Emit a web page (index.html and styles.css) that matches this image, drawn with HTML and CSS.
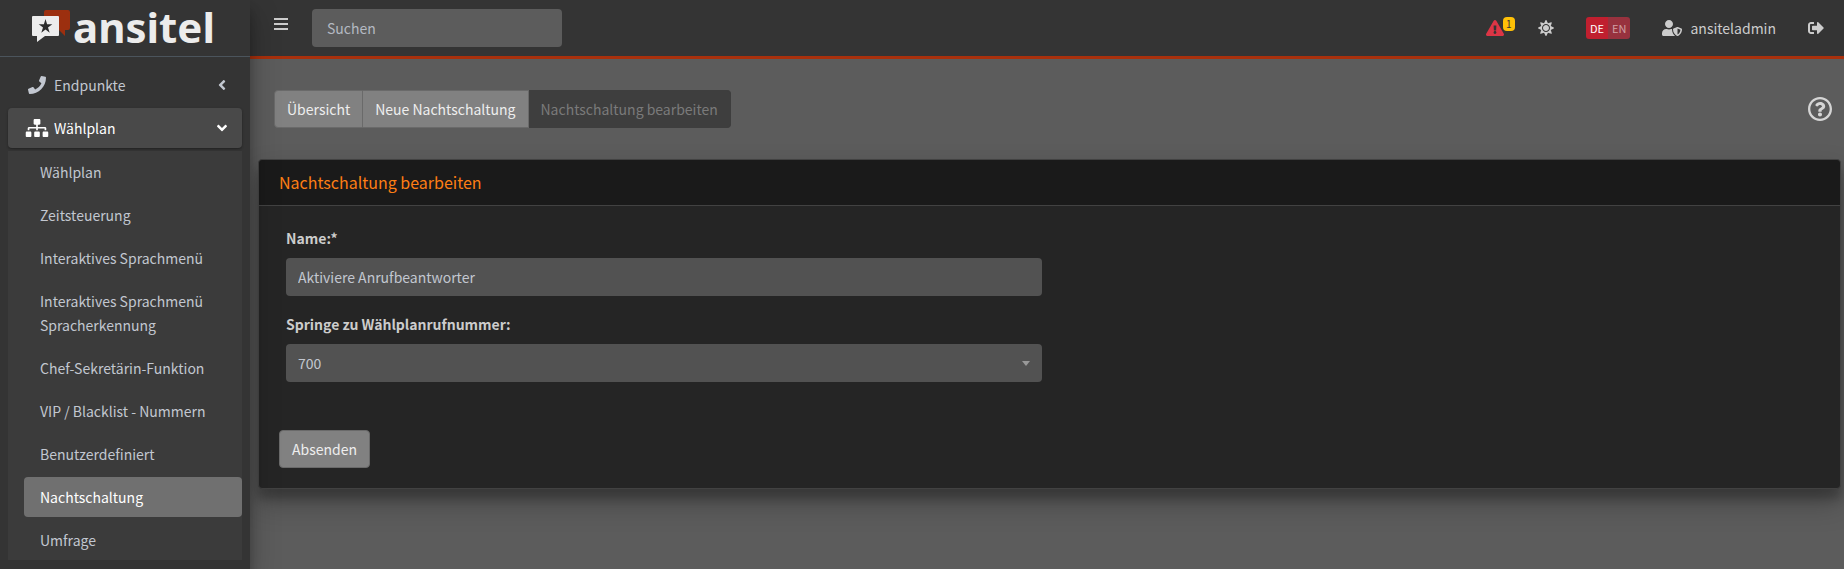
FILE: index.html
```html
<!DOCTYPE html>
<html lang="de">
<head>
    <meta charset="UTF-8">
    <meta name="viewport" content="width=device-width, initial-scale=1.0">
    <title>Nachtschaltung bearbeiten</title>
    <link rel="stylesheet" href="styles.css">
</head>
<body>
    <div class="wrapper">
        <aside class="sidebar">
            <a class="brand" href="#">
                <svg class="brand-mark" viewBox="0 0 38 33" aria-hidden="true">
                    <path fill="#9c2f0f" d="M14 0h22q2 0 2 2v16q0 2-2 2h-3v6l-6-6H14q-2 0-2-2V2q0-2 2-2z"/>
                    <path fill="#ececec" d="M1 6h25q1 0 1 1v18q0 1-1 1H13l-8 6v-6H1q-1 0-1-1V7q0-1 1-1z"/>
                    <path fill="#2b2b2b" d="M13.500 9l1.600 5.200h5.200l-4.300 3.200 1.700 5.300-4.200-3.300-4.200 3.300 1.700-5.300-4.300-3.200h5.200z"/>
                </svg>
                <span class="brand-text">ansitel</span>
            </a>

            <nav class="side-nav">
                <ul class="menu">
                    <li>
                        <a class="nav-link" href="#">
                            <svg class="nav-icon" viewBox="0 0 512 512" aria-hidden="true"><path d="M493.4 24.6l-104-24c-11.3-2.6-22.9 3.3-27.5 13.9l-48 112c-4.2 9.8-1.4 21.3 6.9 28l60.6 49.6c-36 76.7-98.9 140.5-177.2 177.2l-49.6-60.6c-6.8-8.3-18.2-11.1-28-6.900l-112 48C3.900 366.500-2 378.100.6 389.400l24 104C27.100 504.200 36.700 512 48 512c256.100 0 464-207.500 464-464 0-11.200-7.700-20.900-18.600-23.400z"/></svg>
                            <span>Endpunkte</span>
                            <svg class="arrow" viewBox="0 0 256 512" aria-hidden="true"><path d="M31.7 239l136-136c9.400-9.400 24.600-9.400 33.900 0l22.600 22.600c9.400 9.400 9.400 24.600 0 33.900L127.900 256l96.400 96.400c9.400 9.400 9.400 24.600 0 33.900L201.700 409c-9.400 9.400-24.600 9.400-33.900 0l-136-136c-9.500-9.400-9.500-24.600-.1-34z"/></svg>
                        </a>
                    </li>
                    <li>
                        <a class="nav-link open" href="#">
                            <svg class="nav-icon" viewBox="0 0 640 512" aria-hidden="true"><path d="M128 352H32c-17.670 0-32 14.330-32 32v96c0 17.670 14.330 32 32 32h96c17.670 0 32-14.330 32-32v-96c0-17.670-14.330-32-32-32zm-24-80h192v48h48v-48h192v48h48v-57.590c0-21.170-17.230-38.410-38.410-38.410H344v-64h40c17.670 0 32-14.330 32-32V32c0-17.670-14.330-32-32-32H256c-17.670 0-32 14.330-32 32v96c0 17.670 14.330 32 32 32h40v64H94.410C73.230 224 56 241.230 56 262.410V320h48v-48zm264 80h-96c-17.670 0-32 14.330-32 32v96c0 17.670 14.330 32 32 32h96c17.670 0 32-14.330 32-32v-96c0-17.670-14.330-32-32-32zm240 0h-96c-17.670 0-32 14.330-32 32v96c0 17.670 14.330 32 32 32h96c17.670 0 32-14.330 32-32v-96c0-17.670-14.330-32-32-32z"/></svg>
                            <span>Wählplan</span>
                            <svg class="arrow" viewBox="0 0 256 512" aria-hidden="true"><path d="M31.7 239l136-136c9.400-9.400 24.600-9.400 33.900 0l22.600 22.600c9.400 9.400 9.400 24.600 0 33.900L127.900 256l96.400 96.400c9.400 9.400 9.400 24.600 0 33.900L201.700 409c-9.400 9.400-24.600 9.400-33.900 0l-136-136c-9.500-9.400-9.500-24.600-.1-34z"/></svg>
                        </a>
                        <ul class="submenu">
                            <li><a class="nav-link" href="#">Wählplan</a></li>
                            <li><a class="nav-link" href="#">Zeitsteuerung</a></li>
                            <li><a class="nav-link" href="#">Interaktives Sprachmenü</a></li>
                            <li><a class="nav-link" href="#">Interaktives Sprachmenü Spracherkennung</a></li>
                            <li><a class="nav-link" href="#">Chef-Sekretärin-Funktion</a></li>
                            <li><a class="nav-link" href="#">VIP / Blacklist - Nummern</a></li>
                            <li><a class="nav-link" href="#">Benutzerdefiniert</a></li>
                            <li><a class="nav-link active" href="#">Nachtschaltung</a></li>
                            <li><a class="nav-link" href="#">Umfrage</a></li>
                        </ul>
                    </li>
                </ul>
            </nav>
        </aside>

        <div class="page">
            <header class="topbar">
                <button class="icon-btn toggle" type="button" aria-label="Menü">
                    <svg class="bars" viewBox="0 0 14 12" aria-hidden="true"><path d="M0 0h14v2H0zM0 5h14v2H0zM0 10h14v2H0z"/></svg>
                </button>
                <input class="search" type="search" placeholder="Suchen" aria-label="Suchen">

                <div class="topbar-right">
                    <a class="alert" href="#" aria-label="Warnungen">
                        <svg class="icon-alert" viewBox="0 0 576 512" aria-hidden="true"><path d="M569.517 440.013C587.975 472.007 564.806 512 527.940 512H48.054c-36.937 0-59.999-40.055-41.577-71.987L246.423 23.985c18.467-32.009 64.720-31.951 83.154 0l239.940 416.028zM288 354c-25.405 0-46 20.595-46 46s20.595 46 46 46 46-20.595 46-46-20.595-46-46-46zm-43.673-165.346l7.418 136c.347 6.364 5.609 11.346 11.982 11.346h48.546c6.373 0 11.635-4.982 11.982-11.346l7.418-136c.375-6.874-5.098-12.654-11.982-12.654h-63.383c-6.884 0-12.356 5.780-11.981 12.654z"/></svg>
                        <span class="badge">1</span>
                    </a>
                    <button class="icon-btn theme" type="button" aria-label="Helles Design">
                        <svg class="icon" viewBox="0 0 512 512" aria-hidden="true"><path d="M256 160c-52.900 0-96 43.100-96 96s43.100 96 96 96 96-43.100 96-96-43.100-96-96-96zm246.400 80.500l-94.700-47.300 33.500-100.400c4.500-13.600-8.400-26.500-21.900-21.900l-100.400 33.500-47.400-94.800c-6.400-12.800-24.600-12.800-31 0l-47.300 94.700L92.700 70.800c-13.600-4.500-26.500 8.400-21.900 21.900l33.500 100.400-94.700 47.400c-12.800 6.400-12.800 24.600 0 31l94.700 47.300-33.500 100.500c-4.500 13.600 8.400 26.500 21.900 21.900l100.400-33.500 47.300 94.700c6.400 12.800 24.600 12.800 31 0l47.300-94.700 100.400 33.500c13.600 4.500 26.500-8.400 21.900-21.900l-33.500-100.400 94.700-47.300c13-6.500 13-24.700.2-31.100zm-155.900 106c-49.900 49.900-131.100 49.900-181 0-49.900-49.900-49.900-131.100 0-181 49.900-49.900 131.100-49.900 181 0 49.900 49.900 49.900 131.100 0 181z"/></svg>
                    </button>
                    <div class="lang">
                        <button class="lang-btn current" type="button">DE</button>
                        <button class="lang-btn" type="button">EN</button>
                    </div>
                    <a class="user" href="#">
                        <svg class="icon-user" viewBox="0 0 640 512" aria-hidden="true"><path d="M622.3 271.100l-115.200-45c-4.100-1.600-12.600-3.700-22.200 0l-115.200 45c-10.700 4.200-17.700 14-17.700 24.900 0 111.600 68.700 188.800 132.900 213.900 9.600 3.700 18 1.600 22.200 0C558.400 489.900 640 420.500 640 296c0-10.900-7-20.700-17.700-24.900zM496 462.400V273.300l95.500 37.300c-5.600 87.100-60.900 135.400-95.500 151.800zM224 256c70.700 0 128-57.300 128-128S294.700 0 224 0 96 57.300 96 128s57.300 128 128 128zm96 40c0-2.500.8-4.800 1.100-7.200-2.500-.1-4.900-.8-7.500-.8h-16.700c-22.200 10.200-46.900 16-72.900 16s-50.600-5.800-72.900-16h-16.700C60.200 288 0 348.200 0 422.400V464c0 26.500 21.500 48 48 48h352c6.800 0 13.300-1.500 19.200-4-54-42.900-99.200-116.700-99.200-212z"/></svg>
                        <span>ansiteladmin</span>
                    </a>
                    <a class="logout" href="#" aria-label="Abmelden">
                        <svg class="icon" viewBox="0 0 512 512" aria-hidden="true"><path d="M497 273L329 441c-15 15-41 4.500-41-17v-96H152c-13.300 0-24-10.700-24-24v-96c0-13.300 10.700-24 24-24h136V88c0-21.400 25.900-32 41-17l168 168c9.300 9.400 9.300 24.600 0 34zM192 436v-40c0-6.600-5.400-12-12-12H96c-17.700 0-32-14.300-32-32V160c0-17.700 14.300-32 32-32h84c6.600 0 12-5.400 12-12V76c0-6.600-5.400-12-12-12H96c-53 0-96 43-96 96v192c0 53 43 96 96 96h84c6.600 0 12-5.400 12-12z"/></svg>
                    </a>
                </div>
            </header>

            <main class="content">
                <div class="toolbar">
                    <div class="btn-group">
                        <a class="btn" href="#">Übersicht</a>
                        <a class="btn" href="#">Neue Nachtschaltung</a>
                        <span class="btn disabled">Nachtschaltung bearbeiten</span>
                    </div>
                    <a class="help" href="#" aria-label="Hilfe">
                        <svg class="icon-help" viewBox="8 8 496 496" aria-hidden="true"><path d="M256 8C119.043 8 8 119.083 8 256c0 136.997 111.043 248 248 248s248-111.003 248-248C504 119.083 392.957 8 256 8zm0 448c-110.532 0-200-89.431-200-200 0-110.495 89.472-200 200-200 110.491 0 200 89.471 200 200 0 110.530-89.431 200-200 200zm107.244-255.200c0 67.052-72.421 68.084-72.421 92.863V300c0 6.627-5.373 12-12 12h-45.647c-6.627 0-12-5.373-12-12v-8.659c0-35.745 27.100-50.034 47.579-61.516 17.561-9.845 28.324-16.541 28.324-29.579 0-17.246-21.999-28.693-39.784-28.693-23.189 0-33.894 10.977-48.942 29.969-4.057 5.120-11.460 6.071-16.666 2.124l-27.824-21.098c-5.107-3.872-6.251-11.066-2.644-16.363C184.846 131.491 214.940 112 261.794 112c49.071 0 101.450 38.304 101.450 88.800zM298 368c0 23.159-18.841 42-42 42s-42-18.841-42-42 18.841-42 42-42 42 18.841 42 42z"/></svg>
                    </a>
                </div>

                <section class="card">
                    <h1 class="card-header">Nachtschaltung bearbeiten</h1>
                    <form>
                        <div class="card-body">
                            <div class="form-column">
                                <div class="form-group">
                                    <label for="name">Name:*</label>
                                    <input class="form-control" type="text" id="name" name="name" value="Aktiviere Anrufbeantworter" required>
                                </div>
                                <div class="form-group">
                                    <label for="extension">Springe zu Wählplanrufnummer:</label>
                                    <div class="select-wrap">
                                        <select class="form-control" id="extension" name="extension">
                                            <option selected>700</option>
                                        </select>
                                    </div>
                                </div>
                            </div>
                        </div>
                        <div class="card-footer">
                            <button class="btn submit" type="submit">Absenden</button>
                        </div>
                    </form>
                </section>
            </main>
        </div>
    </div>
</body>
</html>
```
FILE: styles.css
```css
* {
    box-sizing: border-box;
}

body {
    margin: 0;
    background: #5c5c5c;
    color: #ccc;
    font-family: "Noto Sans CJK SC", "Noto Sans", sans-serif;
    font-size: 14px;
    line-height: 24px;
}

a {
    color: inherit;
    text-decoration: none;
}

ul {
    list-style: none;
    margin: 0;
    padding: 0;
}

svg {
    display: block;
    fill: currentColor;
    flex-shrink: 0;
}

button,
input,
select {
    font: inherit;
    color: inherit;
}

.wrapper {
    display: flex;
    min-height: 100vh;
}

/* Sidebar */
.sidebar {
    position: relative;
    z-index: 2;
    width: 250px;
    flex-shrink: 0;
    background: #343434;
    color: #c2c7d0;
    box-shadow: 0 14px 28px rgba(0, 0, 0, 0.25), 0 10px 10px rgba(0, 0, 0, 0.22);
}

.brand {
    display: flex;
    gap: 3px;
    height: 57px;
    padding: 10px 32px 0;
    border-bottom: 1px solid #4b545c;
}

.brand-mark {
    width: 38px;
    height: 33px;
}

.brand-text {
    color: #ececec;
    font-family: "Noto Sans", sans-serif;
    font-size: 42px;
    font-weight: bold;
    line-height: 34px;
}

.side-nav {
    padding: 8px 8px 0;
}

.nav-link {
    display: flex;
    align-items: center;
    padding: 8px 16px;
    margin-bottom: 3px;
    border-radius: 4px;
}

.nav-icon {
    width: 26px;
    height: 18px;
    margin-right: 4px;
}

.arrow {
    width: 8px;
    height: 16px;
    margin-left: auto;
}

.open {
    background: #494949;
    color: #fff;
    box-shadow: 0 1px 3px rgba(0, 0, 0, 0.12), 0 1px 2px rgba(0, 0, 0, 0.24);
}

.open .arrow {
    transform: rotate(-90deg);
}

.submenu {
    padding: 1px 0 0 16px;
    background: #3b3b3b;
}

.submenu li:last-child .nav-link {
    margin-bottom: 0;
}

.active {
    background: #707070;
    color: #fff;
}

/* Top bar */
.page {
    flex: 1;
    min-width: 0;
}

.topbar {
    display: flex;
    align-items: center;
    height: 59px;
    padding: 0 20px 0 24px;
    background: #343434;
    border-bottom: 3px solid #a8300c;
}

.icon-btn {
    padding: 0;
    border: 0;
    background: none;
    cursor: pointer;
}

.toggle {
    margin: 0 24px 8px 0;
}

.bars {
    width: 14px;
    height: 12px;
}

.search {
    width: 250px;
    height: 38px;
    padding: 0 15px;
    border: 0;
    border-radius: 4px;
    background: #5c5c5c;
}

.search::placeholder {
    color: #b4b9c2;
    opacity: 1;
}

.topbar-right {
    display: flex;
    align-items: center;
    margin-left: auto;
}

.icon {
    width: 16px;
    height: 16px;
}

.alert {
    position: relative;
    margin-right: 34px;
    color: #dc3545;
}

.icon-alert {
    width: 18px;
    height: 16px;
}

.badge {
    position: absolute;
    top: -3px;
    left: 17px;
    padding: 0 3px;
    border-radius: 4px;
    background: #ffc107;
    color: #343434;
    font-size: 10px;
    line-height: 14px;
}

.theme {
    margin-right: 32px;
}

.lang {
    display: flex;
    margin-right: 32px;
    border-radius: 3px;
    overflow: hidden;
}

.lang-btn {
    padding: 0 4px;
    border: 0;
    background: #98323e;
    color: #d0a0a5;
    font-size: 11px;
    line-height: 22px;
    cursor: pointer;
}

.lang-btn.current {
    background: #c01f2f;
    color: #fff;
}

.user {
    display: flex;
    align-items: center;
    gap: 8px;
    margin-right: 32px;
}

.icon-user {
    width: 20px;
    height: 16px;
}

/* Content */
.content {
    padding: 31px 3px 0 8px;
}

.toolbar {
    display: flex;
    align-items: center;
    justify-content: space-between;
    padding: 0 9px 0 16px;
    margin-bottom: 31px;
}

.btn-group {
    display: flex;
}

.btn {
    padding: 6px 12px;
    border: 1px solid #6a6a6a;
    border-radius: 4px;
    background: #818181;
    color: #eee;
}

.btn-group .btn {
    border-radius: 0;
}

.btn-group .btn + .btn {
    border-left: 0;
}

.btn-group .btn:first-child {
    border-radius: 4px 0 0 4px;
}

.btn-group .disabled {
    border-color: #3e3e3e;
    border-radius: 0 4px 4px 0;
    background: #3e3e3e;
    color: #7a7a7a;
}

.help {
    color: #d5d5d5;
}

.icon-help {
    width: 24px;
    height: 24px;
}

.card {
    border: 1px solid #424242;
    border-radius: 4px;
    background: #252525;
    box-shadow: 0 14px 28px rgba(0, 0, 0, 0.25), 0 10px 10px rgba(0, 0, 0, 0.22);
}

.card-header {
    margin: 0;
    padding: 10px 20px;
    border-bottom: 1px solid #424242;
    border-radius: 4px 4px 0 0;
    background: #1a1a1a;
    color: #fd7e14;
    font-size: 16px;
    font-weight: normal;
    line-height: 25px;
}

.card-body {
    display: grid;
    grid-template-columns: 1fr 1fr;
    gap: 15px;
    padding: 20px 27px 32px;
}

.form-group {
    margin-bottom: 16px;
}

.form-group label {
    display: block;
    margin-bottom: 8px;
    font-weight: bold;
}

.form-control {
    display: block;
    width: 100%;
    height: 38px;
    padding: 0 12px;
    border: 0;
    border-radius: 4px;
    background: #525252;
    color: #c2c7d0;
    appearance: none;
}

.select-wrap {
    position: relative;
}

.select-wrap::after {
    content: "";
    position: absolute;
    top: 17px;
    right: 12px;
    border: 4px solid transparent;
    border-top: 5px solid #999;
    border-bottom: 0;
    pointer-events: none;
}

.card-footer {
    padding: 0 20px 20px;
}

.submit {
    cursor: pointer;
}
```
